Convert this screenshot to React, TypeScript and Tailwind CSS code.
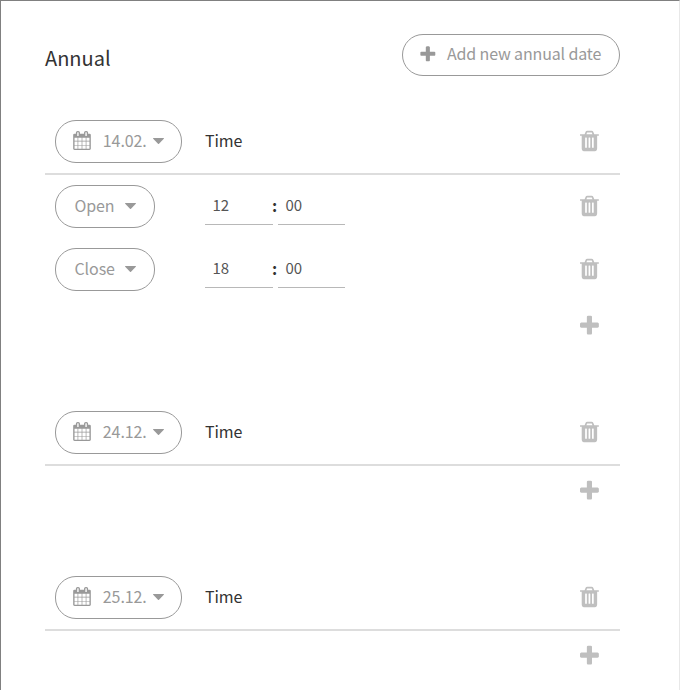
import React from "react";

const ICONS = {
  calendar: {
    viewBox: "64 0 1664 1792",
    d: "M192 1664h288v-288h-288v288zm352 0h320v-288h-320v288zm-352-352h288v-320h-288v320zm352 0h320v-320h-320v320zm-352-384h288v-288h-288v288zm736 736h320v-288h-320v288zm-384-736h320v-288h-320v288zm768 736h288v-288h-288v288zm-384-352h320v-320h-320v320zm-352-864v-288q0-13-9.5-22.5t-22.5-9.5h-64q-13 0-22.5 9.5t-9.5 22.5v288q0 13 9.5 22.5t22.5 9.5h64q13 0 22.5-9.5t9.5-22.5zm736 864h288v-320h-288v320zm-384-384h320v-288h-320v288zm384 0h288v-288h-288v288zm32-480v-288q0-13-9.5-22.5t-22.5-9.5h-64q-13 0-22.5 9.5t-9.5 22.5v288q0 13 9.5 22.5t22.5 9.5h64q13 0 22.5-9.5t9.5-22.5zm384-64v1280q0 52-38 90t-90 38h-1408q-52 0-90-38t-38-90v-1280q0-52 38-90t90-38h128v-96q0-66 47-113t113-47h64q66 0 113 47t47 113v96h384v-96q0-66 47-113t113-47h64q66 0 113 47t47 113v96h128q52 0 90 38t38 90z",
  },
  trash: {
    viewBox: "-32 0 1792 1792",
    d: "M704 1376v-704q0-14-9-23t-23-9h-64q-14 0-23 9t-9 23v704q0 14 9 23t23 9h64q14 0 23-9t9-23zm256 0v-704q0-14-9-23t-23-9h-64q-14 0-23 9t-9 23v704q0 14 9 23t23 9h64q14 0 23-9t9-23zm256 0v-704q0-14-9-23t-23-9h-64q-14 0-23 9t-9 23v704q0 14 9 23t23 9h64q14 0 23-9t9-23zm-544-992h448l-48-117q-7-9-17-11h-317q-10 2-17 11zm928 32v64q0 14-9 23t-23 9h-96v948q0 83-47 143.5t-113 60.5h-832q-66 0-113-58.5t-47-141.5v-952h-96q-14 0-23-9t-9-23v-64q0-14 9-23t23-9h309l70-167q15-37 54-63t79-26h320q40 0 79 26t54 63l70 167h309q14 0 23 9t9 23z",
  },
  plus: {
    viewBox: "-32 0 1792 1792",
    d: "M1600 736v192q0 40-28 68t-68 28h-416v416q0 40-28 68t-68 28h-192q-40 0-68-28t-28-68v-416h-416q-40 0-68-28t-28-68v-192q0-40 28-68t68-28h416v-416q0-40 28-68t68-28h192q40 0 68 28t28 68v416h416q40 0 68 28t28 68z",
  },
};

function Icon({ name, className }: { name: keyof typeof ICONS; className: string }) {
  return (
    <svg viewBox={ICONS[name].viewBox} fill="currentColor" className={`shrink-0 ${className}`}>
      <path d={ICONS[name].d} />
    </svg>
  );
}

function Caret() {
  return (
    <svg viewBox="0 0 11 6" fill="currentColor" className="h-[6px] w-[11px] shrink-0">
      <path d="M.4 0h10.2q.6.2.2.7L6 5.7q-.5.5-1 0L.2.7Q-.2.2.4 0z" />
    </svg>
  );
}

function IconButton({ name }: { name: "trash" | "plus" }) {
  return (
    <button className="ml-auto mr-[19px] text-[#bfbfbf]">
      <Icon name={name} className="block size-6" />
    </button>
  );
}

function TimeField({ value }: { value: string }) {
  return <div className="h-[39px] flex-1 border-b border-[#b8b8b8] pl-[7.5px] text-[15px] leading-[38px] text-[#555]">{value}</div>;
}

function TimeRow({ label, hour }: { label: string; hour: string }) {
  return (
    <div className="flex h-[63px] items-center pl-[10px]">
      <button className="flex h-[43px] w-[100px] items-center justify-between rounded-[21px] border border-[#999] pl-[18.5px] pr-[18px] text-[16px] tracking-[-0.1px] text-[#999]">
        <span className="pb-[3px] leading-none">{label}</span>
        <span className="pb-[2px]"><Caret /></span>
      </button>
      <div className="mb-[2px] ml-[50px] flex w-[140px] items-start">
        <div className="flex w-[68px]"><TimeField value={hour} /></div>
        <span className="w-[5px] text-[16px] font-bold leading-[38px] text-[#333] -indent-px">:</span>
        <div className="flex w-[67px]"><TimeField value="00" /></div>
      </div>
      <div className="mb-[2px] ml-auto flex"><IconButton name="trash" /></div>
    </div>
  );
}

function DateGroup({ date, rows = [] }: { date: string; rows?: { label: string; hour: string }[] }) {
  return (
    <section>
      <div className="flex h-[55px] items-start border-b-2 border-[#ddd] pl-[10px]">
        <button className="flex h-[43px] w-[127px] items-center rounded-[21px] border border-[#999] pl-[17px] text-[16px] text-[#999]">
          <Icon name="calendar" className="mb-[2px] h-[19px] w-[18px]" />
          <span className="ml-[10.5px] w-[46.5px] pb-[3px] leading-none tracking-[-0.1px]">{date}</span>
          <span className="ml-[5px] pb-[2px]"><Caret /></span>
        </button>
        <span className="ml-[23px] text-[16px] leading-[40px] tracking-[-0.1px] text-[#333]">Time</span>
        <div className="ml-auto flex h-[41px] items-center"><IconButton name="trash" /></div>
      </div>
      {rows.map((row) => <TimeRow key={row.label} {...row} />)}
      <div className="flex h-[110px] items-start pt-[13px]"><IconButton name="plus" /></div>
    </section>
  );
}

export default function App() {
  return (
    <main className="h-[690px] w-[680px] overflow-hidden border-l border-r border-t border-l-[#808080] border-r-[#e8e8e8] border-t-[#808080] bg-white pl-[44px] pr-[59px] pt-[33px] font-['Noto_Sans_CJK_SC',sans-serif]">
      <header className="flex h-[86px] items-start justify-between">
        <h1 className="text-[20px] leading-[48px] text-[#333]">Annual</h1>
        <button className="flex h-[42px] w-[218px] items-center rounded-[21px] border border-[#999] pl-[15px] text-[16px] text-[#999]">
          <Icon name="plus" className="mb-[2px] size-[19px]" />
          <span className="ml-[10px] whitespace-nowrap pb-[5px] leading-none tracking-[-0.15px]">Add new annual date</span>
        </button>
      </header>
      <DateGroup date="14.02." rows={[{ label: "Open", hour: "12" }, { label: "Close", hour: "18" }]} />
      <DateGroup date="24.12." />
      <DateGroup date="25.12." />
    </main>
  );
}
